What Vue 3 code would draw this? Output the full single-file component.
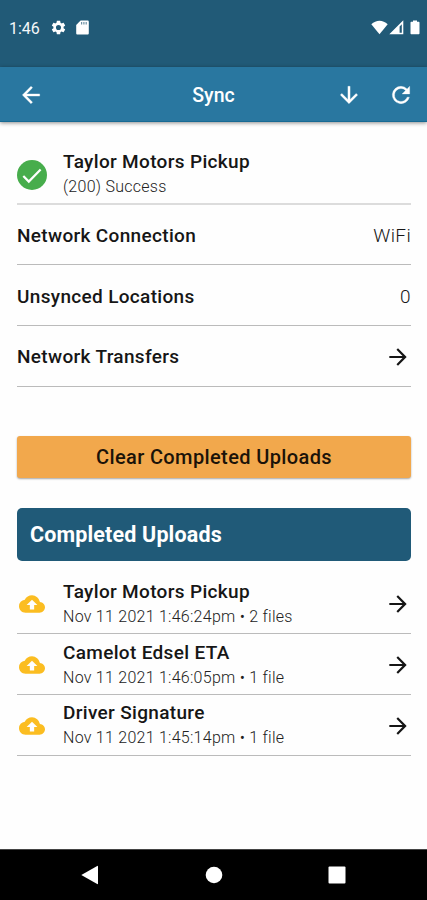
<script setup>
const info = [
  { label: 'Network Connection', value: 'WiFi' },
  { label: 'Unsynced Locations', value: '0' },
  { label: 'Network Transfers', value: '' },
]

const uploads = [
  { title: 'Taylor Motors Pickup', detail: 'Nov 11 2021 1:46:24pm • 2 files' },
  { title: 'Camelot Edsel ETA', detail: 'Nov 11 2021 1:46:05pm • 1 file' },
  { title: 'Driver Signature', detail: 'Nov 11 2021 1:45:14pm • 1 file' },
]

const forward = 'M12 4l-1.41 1.41L16.17 11H4v2h12.17l-5.58 5.59L12 20l8-8z'
</script>

<template>
  <div class="screen">
    <div class="status">
      <span class="clock">1:46</span>
      <svg class="gear" viewBox="0 0 24 24"><path d="M19.14 12.94c.04-.3.06-.61.06-.94 0-.32-.02-.64-.07-.94l2.03-1.58c.18-.14.23-.41.12-.61l-1.92-3.32c-.12-.22-.37-.29-.59-.22l-2.39.96c-.5-.38-1.03-.7-1.62-.94l-.36-2.54c-.04-.24-.24-.41-.48-.41h-3.84c-.24 0-.43.17-.47.41l-.36 2.54c-.59.24-1.13.57-1.62.94l-2.39-.96c-.22-.08-.47 0-.59.22L2.74 8.87c-.12.21-.08.47.12.61l2.03 1.58c-.05.3-.09.63-.09.94s.02.64.07.94l-2.03 1.58c-.18.14-.23.41-.12.61l1.92 3.32c.12.22.37.29.59.22l2.39-.96c.5.38 1.03.7 1.62.94l.36 2.54c.05.24.24.41.48.41h3.84c.24 0 .44-.17.47-.41l.36-2.54c.59-.24 1.13-.56 1.62-.94l2.39.96c.22.08.47 0 .59-.22l1.92-3.32c.12-.22.07-.47-.12-.61l-2.01-1.58zM12 15.6A3.6 3.6 0 1 1 12 8.4a3.6 3.6 0 0 1 0 7.2z" /></svg>
      <svg class="card" viewBox="0 0 13 15"><path d="M4.6.5h6.900c.8 0 1.300.5 1.300 1.300v11.400c0 .8-.5 1.300-1.300 1.300h-10c-.8 0-1.300-.5-1.300-1.300V4.900z" /><path class="notch" d="M5 2h1.200v2.400H5zM7.300 2h1.200v2.400H7.300zM9.600 2h1.200v2.400H9.600z" /></svg>
      <svg class="wifi" viewBox="0 0 17 15"><path d="M.3 4.300C2.800 1.900 5.500.7 8.500.7s5.700 1.200 8.200 3.600L8.500 14.300z" /></svg>
      <svg class="signal" viewBox="0 0 15 15"><path fill-rule="evenodd" d="M14.300.300v14H.300zM12.800 4.200l-2.200 2.200v6.400h2.200z" /></svg>
      <svg class="battery" viewBox="0 0 10 15"><path d="M3 .4h4v1.300h1.500c.6 0 1 .4 1 1v10.600c0 .6-.4 1-1 1h-7c-.6 0-1-.4-1-1V2.700c0-.6.4-1 1-1H3z" /></svg>
    </div>

    <header class="bar">
      <svg class="icon" viewBox="0 0 24 24"><path d="M20 11H7.830l5.590-5.590L12 4l-8 8 8 8 1.410-1.410L7.830 13H20z" /></svg>
      <h1>Sync</h1>
      <div class="actions">
        <svg class="icon" viewBox="0 0 24 24"><path d="M20 12l-1.410-1.410L13 16.170V4h-2v12.170l-5.580-5.590L4 12l8 8z" /></svg>
        <svg class="icon" viewBox="0 0 24 24"><path d="M17.650 6.350A7.960 7.960 0 0 0 12 4a8 8 0 1 0 7.730 10h-2.080A6 6 0 1 1 12 6c1.660 0 3.140.690 4.220 1.780L13 11h7V4z" /></svg>
      </div>
    </header>

    <main>
      <div class="row first">
        <svg class="check" viewBox="0 0 30 30"><circle cx="15" cy="15" r="15" /><path d="M6.300 16l5.500 5.600L23.600 9.500" /></svg>
        <div class="text">
          <strong>Taylor Motors Pickup</strong>
          <small>(200) Success</small>
        </div>
      </div>
      <div v-for="item in info" :key="item.label" class="row">
        <strong>{{ item.label }}</strong>
        <span v-if="item.value" class="value">{{ item.value }}</span>
        <svg v-else class="go" viewBox="0 0 24 24"><path :d="forward" /></svg>
      </div>

      <button class="clear">Clear Completed Uploads</button>
      <h2>Completed Uploads</h2>

      <div v-for="item in uploads" :key="item.title" class="row">
        <svg class="cloud" viewBox="0 0 24 24"><path d="M19.350 10.040A7.490 7.490 0 0 0 12 4C9.110 4 6.600 5.640 5.350 8.040A5.994 5.994 0 0 0 0 14c0 3.310 2.690 6 6 6h13c2.760 0 5-2.240 5-5 0-2.640-2.050-4.780-4.650-4.960zM14 13v4h-4v-4H7l5-5 5 5z" /></svg>
        <div class="text">
          <strong>{{ item.title }}</strong>
          <small>{{ item.detail }}</small>
        </div>
        <svg class="go" viewBox="0 0 24 24"><path :d="forward" /></svg>
      </div>
    </main>

    <nav>
      <svg viewBox="0 0 18 20"><path d="M.3 10L16.200.900q.8-.4.800.5v17.200q0 .9-.8.500z" /></svg>
      <svg viewBox="0 0 18 20"><circle cx="9" cy="10" r="8.300" /></svg>
      <svg viewBox="0 0 18 20"><rect x=".5" y="1.500" width="17" height="17" rx="1" /></svg>
    </nav>
  </div>
</template>

<style>
body {
  margin: 0;
  background: #fff;
}
</style>

<style scoped>
.screen {
  display: flex;
  flex-direction: column;
  width: 427px;
  height: 900px;
  overflow: hidden;
  background: #fefefe;
  color: #161616;
  font-family: Roboto, "Liberation Sans", sans-serif;
}
.status {
  display: flex;
  align-items: center;
  flex: 0 0 67px;
  box-sizing: border-box;
  padding: 0 7px 13px 9px;
  background: #215a77;
  color: #f4f8fa;
}
.status svg {
  fill: #fff;
}
.clock {
  width: 41px;
  font-size: 16px;
  line-height: 20px;
  padding-top: 3px;
}
.gear {
  width: 17px;
  height: 17px;
  margin-right: 9px;
}
.card {
  width: 13px;
  height: 15px;
}
.status .notch {
  fill: #6e91a3;
}
.wifi {
  width: 17px;
  height: 15px;
  margin-left: auto;
}
.signal {
  width: 15px;
  height: 15px;
  margin: 0 6px 0 1px;
}
.battery {
  width: 10px;
  height: 15px;
}
.bar {
  display: grid;
  grid-template-columns: 1fr auto 1fr;
  align-items: center;
  flex: 0 0 55px;
  box-sizing: border-box;
  padding: 2px 13px 0 18px;
  background: #2977a0;
  border-bottom: 1px solid #176a94;
  box-shadow: 0 1px 4px rgba(0, 0, 0, 0.45);
  color: #fff;
}
.icon {
  width: 26px;
  height: 26px;
  fill: #fff;
  stroke: #fff;
  stroke-width: 0.3;
}
h1 {
  margin: 0 0 0 -5px;
  padding-top: 2px;
  font-size: 19.5px;
  font-weight: 500;
  line-height: 24px;
}
.actions {
  display: flex;
  justify-content: flex-end;
  gap: 26px;
}
main {
  display: flex;
  flex-direction: column;
  flex: 1;
  padding: 22px 16px 0 17px;
}
.row {
  display: flex;
  align-items: center;
  flex: 0 0 60.67px;
  box-sizing: border-box;
  padding-top: 2px;
  border-bottom: 1px solid #bbb;
}
.row.first {
  padding-top: 3px;
  border-bottom: 2px solid #dcdcdc;
}
.row strong {
  padding-top: 1px;
  font-size: 19px;
  font-weight: 500;
  line-height: 24px;
  letter-spacing: 0.33px;
}
.text {
  display: flex;
  flex-direction: column;
}
small {
  font-size: 16px;
  font-weight: 300;
  line-height: 26px;
  letter-spacing: 0.26px;
  color: #222;
}
.value {
  margin-left: auto;
  padding-top: 1px;
  font-size: 19px;
  font-weight: 300;
  letter-spacing: 0.35px;
}
.check {
  width: 30px;
  height: 30px;
  margin-right: 16px;
  fill: #47ad4c;
}
.check path {
  fill: none;
  stroke: #fff;
  stroke-width: 2.2;
}
.go {
  width: 26px;
  height: 26px;
  margin-left: auto;
  fill: #151515;
}
.cloud {
  width: 26px;
  height: 26px;
  margin: 0 18px 0 2px;
  fill: #fbbd21;
}
.clear {
  height: 42px;
  margin: 49px 0 30px;
  padding: 1px 0 0;
  border: 0;
  border-radius: 3px;
  background: #f2a84c;
  box-shadow: 0 1px 2px rgba(0, 0, 0, 0.35);
  color: #1b1309;
  font-family: inherit;
  font-size: 20px;
  font-weight: 500;
  letter-spacing: 0.38px;
}
h2 {
  height: 53px;
  box-sizing: border-box;
  margin: 0 0 13px;
  padding: 0 13px;
  border-radius: 5px;
  background: #205a78;
  color: #fff;
  font-size: 21.5px;
  font-weight: 700;
  line-height: 53px;
  letter-spacing: 0.15px;
}
nav {
  display: flex;
  justify-content: space-between;
  align-items: center;
  flex: 0 0 51px;
  box-sizing: border-box;
  padding: 0 81px;
  background: #000;
  border-top: 1px solid #444;
}
nav svg {
  width: 18px;
  height: 20px;
  fill: #fff;
}
</style>
